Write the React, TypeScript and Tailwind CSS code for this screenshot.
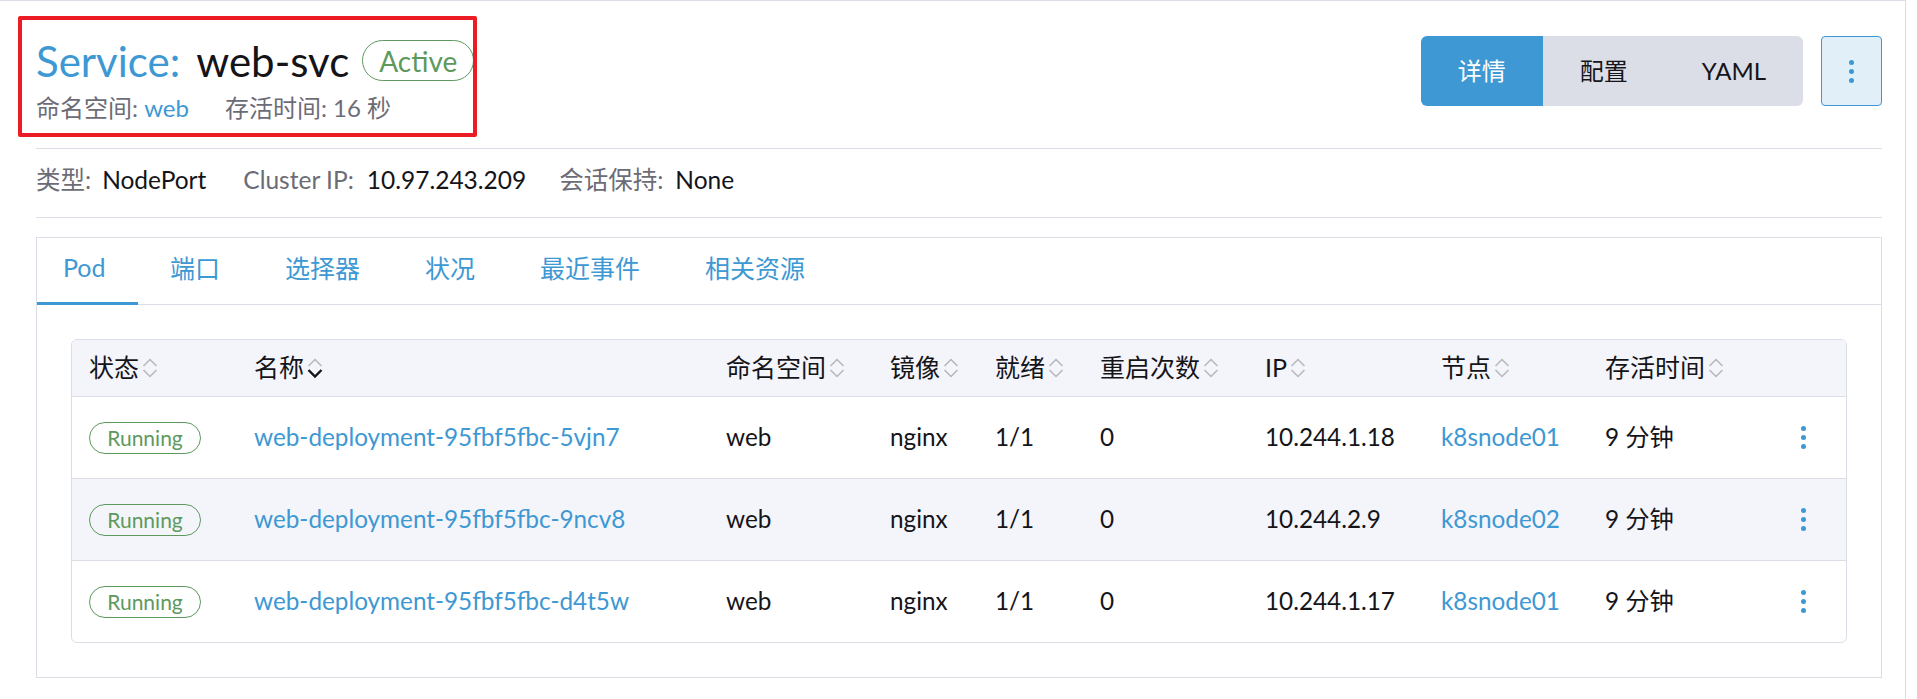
import type { ReactNode } from 'react'

const FONT = 'font-[Lato,"Noto_Sans_CJK_SC",sans-serif]'

type Pod = {
  name: string
  ip: string
  node: string
}

const pods: Pod[] = [
  { name: 'web-deployment-95fbf5fbc-5vjn7', ip: '10.244.1.18', node: 'k8snode01' },
  { name: 'web-deployment-95fbf5fbc-9ncv8', ip: '10.244.2.9', node: 'k8snode02' },
  { name: 'web-deployment-95fbf5fbc-d4t5w', ip: '10.244.1.17', node: 'k8snode01' },
]

const columns = ['状态', '名称', '命名空间', '镜像', '就绪', '重启次数', 'IP', '节点', '存活时间']

const tabs = ['Pod', '端口', '选择器', '状况', '最近事件', '相关资源']

const GRID = 'grid grid-cols-[165px_472px_164px_105px_105px_165px_176px_164px_1fr_86px] items-center'

function SortIcon({ active }: { active?: boolean }) {
  return (
    <svg width="16" height="22" viewBox="0 0 16 22" fill="none" className="ml-[3px] shrink-0">
      <path d="M1.5 9 L8 2.5 L14.5 9" stroke="#b6b6bd" strokeWidth="1.5" />
      <path
        d="M1.5 13 L8 19.5 L14.5 13"
        stroke={active ? '#141419' : '#b6b6bd'}
        strokeWidth={active ? 2.4 : 1.5}
      />
    </svg>
  )
}

function Dots({ size = 5, gap = 4 }: { size?: number; gap?: number }) {
  return (
    <svg width={size} height={size * 3 + gap * 2} viewBox={`0 0 ${size} ${size * 3 + gap * 2}`}>
      {[0, 1, 2].map((i) => (
        <circle key={i} cx={size / 2} cy={size / 2 + i * (size + gap)} r={size / 2} fill="#3d98d3" />
      ))}
    </svg>
  )
}

function Badge({ children, big }: { children: ReactNode; big?: boolean }) {
  return (
    <span
      className={
        big
          ? 'inline-flex items-center justify-center h-[41px] px-[16px] rounded-full border border-[#5d995d] text-[#5d995d] text-[28px]'
          : 'inline-flex items-center justify-center h-[32px] w-[112px] rounded-full border border-[#5d995d] text-[#5d995d] text-[21px]'
      }
    >
      {children}
    </span>
  )
}

export default function App() {
  return (
    <div className={`${FONT} w-[1906px] h-[699px] bg-white border-t border-r border-[#dcdee7] text-[#141419] pl-[36px] pr-[23px] overflow-hidden`}>
      {/* header */}
      <div className="h-[148px] border-b border-[#dcdee7] flex justify-between items-start">
        <div className="relative pt-[39px]">
          <div className="absolute left-[-18px] top-[15px] w-[459px] h-[121px] border-4 border-[#ec1c24] rounded-[2px]" />
          <div className="flex items-center h-[41px]">
            <span className="text-[42px] leading-none text-[#3d98d3]">Service:</span>
            <span className="text-[42px] leading-none ml-[16px]">web-svc</span>
            <span className="ml-[13px]">
              <Badge big>Active</Badge>
            </span>
          </div>
          <div className="flex items-center mt-[12px] text-[24px] leading-[30px] text-[#6c6c76]">
            <span>
              命名空间: <span className="text-[#3d98d3]">web</span>
            </span>
            <span className="ml-[36px]">存活时间: 16 秒</span>
          </div>
        </div>

        <div className="flex items-center pt-[35px]">
          <div className="flex h-[70px] rounded-[6px] overflow-hidden text-[24px]">
            <button className="px-[37px] bg-[#3d98d3] text-white">详情</button>
            <button className="px-[37px] bg-[#dcdee7]">配置</button>
            <button className="px-[37px] bg-[#dcdee7]">YAML</button>
          </div>
          <button className="ml-[18px] w-[61px] h-[70px] rounded-[4px] border border-[#3d98d3] bg-[#e1eff8] flex items-center justify-center">
            <Dots size={5} gap={4} />
          </button>
        </div>
      </div>

      {/* summary */}
      <div className="h-[69px] border-b border-[#dcdee7] flex items-center pb-[6px] text-[24.5px]">
        <span className="text-[#6c6c76]">类型:</span>
        <span className="ml-[11px]">NodePort</span>
        <span className="ml-[37px] text-[#6c6c76]">Cluster IP:</span>
        <span className="ml-[13px]">10.97.243.209</span>
        <span className="ml-[33px] text-[#6c6c76]">会话保持:</span>
        <span className="ml-[12px]">None</span>
      </div>

      {/* tabbed panel */}
      <div className="mt-[19px] border border-[#dcdee7]">
        <div className="h-[67px] border-b border-[#dcdee7] flex text-[25px] text-[#3d98d3]">
          {tabs.map((t, i) => (
            <div
              key={t}
              className={
                i === 0
                  ? 'pl-[26px] pr-[32px] flex items-center pb-[4px] border-b-[3px] border-[#3d98d3] mb-[-1px]'
                  : 'px-[32.5px] flex items-center pb-[4px]'
              }
            >
              {t}
            </div>
          ))}
        </div>

        <div className="p-[34px]">
          <div className="border border-[#dcdee7] rounded-[6px] overflow-hidden text-[24.3px]">
            <div className={`${GRID} h-[57px] bg-[#f4f5fa] border-b border-[#dcdee7] text-[25px]`}>
              {columns.map((c, i) => (
                <div key={c} className="pl-[17px] flex items-center">
                  <span>{c}</span>
                  <SortIcon active={i === 1} />
                </div>
              ))}
              <div />
            </div>
            {pods.map((p, i) => (
              <div
                key={p.name}
                className={`${GRID} ${i < pods.length - 1 ? 'h-[82px] border-b border-[#dcdee7]' : 'h-[81px]'} ${
                  i === 1 ? 'bg-[#f4f5fa]' : ''
                }`}
              >
                <div className="pl-[17px]">
                  <Badge>Running</Badge>
                </div>
                <div className="pl-[17px] text-[#3d98d3]">{p.name}</div>
                <div className="pl-[17px]">web</div>
                <div className="pl-[17px]">nginx</div>
                <div className="pl-[17px]">1/1</div>
                <div className="pl-[17px]">0</div>
                <div className="pl-[17px]">{p.ip}</div>
                <div className="pl-[17px] text-[#3d98d3]">{p.node}</div>
                <div className="pl-[17px]">9 分钟</div>
                <div className="flex justify-center">
                  <Dots size={5} gap={4} />
                </div>
              </div>
            ))}
          </div>
        </div>
      </div>
    </div>
  )
}
